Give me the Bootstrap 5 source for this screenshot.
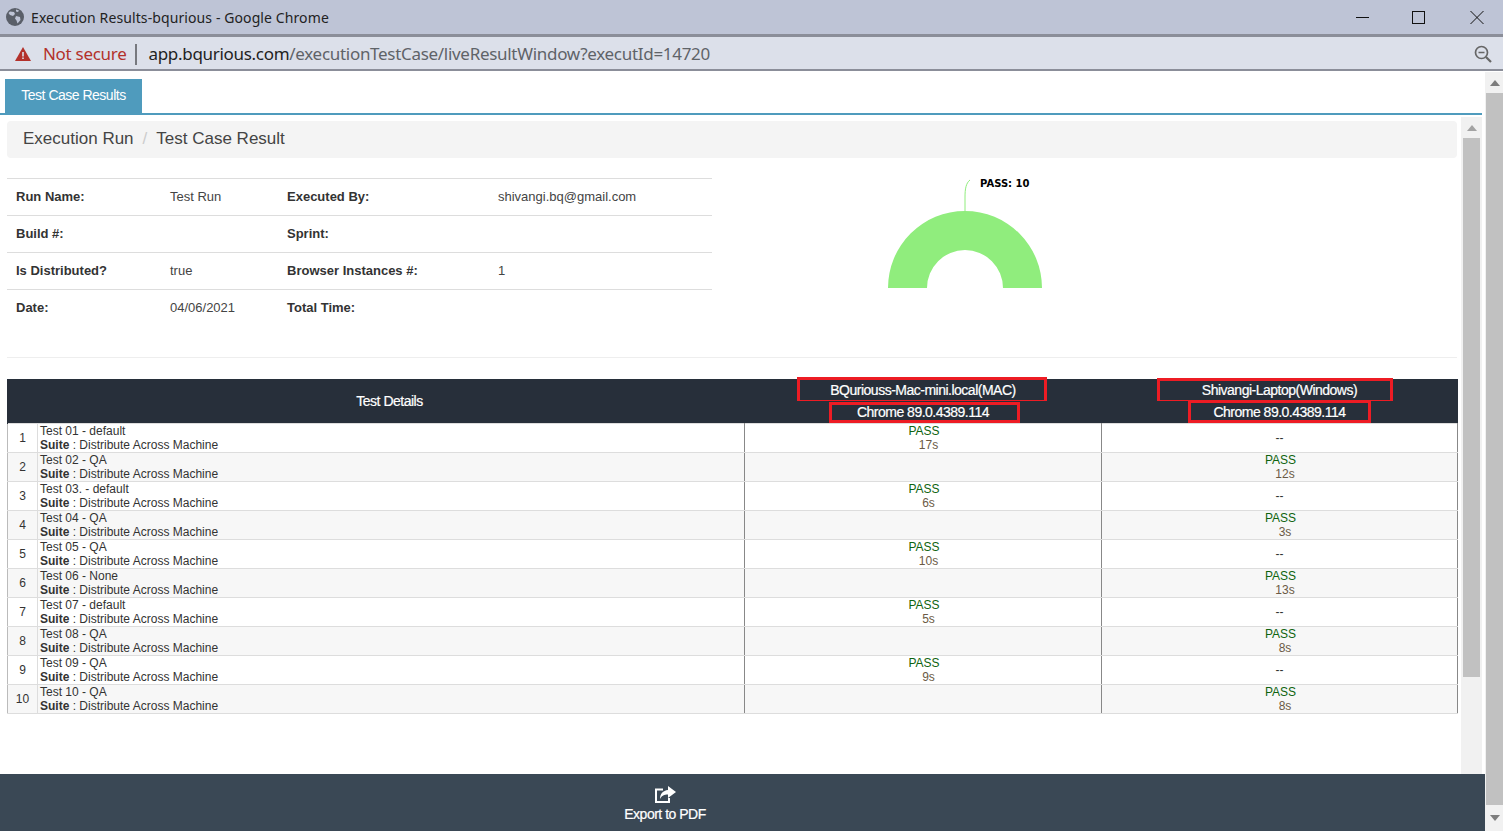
<!DOCTYPE html>
<html lang="en">
<head>
    <meta charset="UTF-8">
    <meta name="viewport" content="width=device-width, initial-scale=1.0">
    <title>Execution Results-bqurious</title>
    <link rel="stylesheet" href="https://cdn.jsdelivr.net/npm/bootstrap@5.3.0/dist/css/bootstrap.min.css">
    <style>
        html, body { height: 831px; overflow: hidden; }
        body { font-family: "Liberation Sans", Arial, sans-serif; color: #333; background: #fff; }

        /* browser window */
        .win-title { height: 37px; background: #bec4d6; border-bottom: 3px solid #8b8e99; padding-left: 6px; font-family: "Noto Sans", sans-serif; font-size: 14px; letter-spacing: .1px; color: #222; }
        .win-title-text { margin-left: 7px; }
        .win-btn { width: 56px; height: 34px; }
        .win-close { padding-left: 3px; }
        .addr-bar { height: 35px; background: #dce0ea; border-bottom: 1px solid #fff; box-shadow: inset 0 -2px 0 #8b8e99; padding: 0 11px 0 15px; font-family: "Noto Sans", sans-serif; font-size: 17px; color: #5f6368; letter-spacing: -.3px; }
        .not-secure { color: #b3312b; margin-left: 12px; }
        .addr-sep { width: 2px; height: 21px; background: #77797f; margin: 0 11px 0 9px; }
        .addr-host { color: #222; }

        /* page */
        .app-shell { height: 759px; }
        .app-main { width: 1485px; }
        .tab-row { height: 43px; padding: 7px 3px 0 5px; margin-right: 3px; border-bottom: 2px solid #4f9bbd; }
        .tab-active { width: 137px; height: 34px; background: #4f9bbd; color: #fff; font-size: 14px; letter-spacing: -.5px; line-height: 33px; text-align: center; }
        .panel-wrap { height: 660px; padding-top: 2px; margin-right: 3px; }
        .panel-body { width: 1461px; padding: 4px 4px 0 7px; }
        .crumbs { height: 37px; background: #f4f4f4; border-radius: 4px; padding: 0 0 1px 16px; font-size: 17px; color: #444; margin-bottom: 20px; }
        .crumb-sep { color: #ccc; margin: 0 9px; }

        .info-wrap { height: 180px; border-bottom: 1px solid #eee; }
        .info-tbl { width: 705px; font-size: 13px; margin: 0; color: #444; }
        .info-tbl td { height: 37px; padding: 0 9px; vertical-align: middle; border-top: 1px solid #ddd; border-bottom: 0; color: #444; }
        .info-tbl tr:last-child td { padding-bottom: 2px; }
        .info-tbl td.lbl { font-weight: 700; color: #333; }
        .w-a { width: 154px; } .w-b { width: 117px; } .w-c { width: 211px; } .w-d { width: 223px; }
        .chart-box { width: 744px; height: 178px; }

        .res-tbl { width: 1450px; margin: 21px 0 0; table-layout: fixed; font-size: 12px; line-height: 14px; color: #333; border-collapse: collapse; }
        .res-tbl thead th { background: #272f3a; color: #fff; font-weight: 400; font-size: 14px; letter-spacing: -.5px; text-align: center; vertical-align: middle; padding: 0; height: 22px; border: 0; -webkit-text-stroke: .2px #fff; }
        .res-tbl thead th.c-w1 { border-left: 1px solid #272f3a; }
        .res-tbl thead th.c-w2 { padding-right: 3px; }
        .res-tbl tbody td { height: 29px; padding: 0; border: 1px solid #ddd; vertical-align: middle; background: #fff; }
        .res-tbl tbody tr:nth-child(even) td { background: #f7f7f7; }
        .res-tbl tbody td.c-num { text-align: center; border-left-color: #bbb; }
        .res-tbl tbody td.c-test { padding-left: 2px; border-right-color: #888; }
        .res-tbl tbody td.c-res { text-align: center; border-left-color: #888; border-right-color: #888; }
        .c-w1 { width: 30px; } .c-w2 { width: 707px; } .c-w3 { width: 357px; } .c-w4 { width: 356px; }
        .res-pass { color: #0f640f; display: block; margin-left: 2px; }
        .res-time { color: #6b5a45; display: block; margin-left: 11px; }
        .th-host { position: relative; }
        .red-box { position: absolute; border: 3px solid #ed1c24; pointer-events: none; }
        .rb1 { left: 52px; top: -2px; width: 250px; height: 26px; }
        .rb2 { left: 84px; top: 1px; width: 191px; height: 21px; }
        .rb3 { left: 55px; top: -1px; width: 236px; height: 25px; }
        .rb4 { left: 86px; top: -1px; width: 183px; height: 23px; }

        .inner-scroll { width: 21px; background: #f1f1f1; padding: 0 2px; }
        .scroll-up { height: 21px; }
        .inner-thumb { width: 17px; height: 539px; background: #c1c1c1; }
        .app-foot { height: 57px; background: #3a4855; color: #fff; font-size: 14px; letter-spacing: -.5px; }
        .export-btn { width: 1330px; line-height: 16px; -webkit-text-stroke: .2px #fff; }
        .export-ico { margin-bottom: 2px; }

        .outer-scroll { width: 18px; background: #f1f1f1; padding-left: 1px; }
        .outer-up { height: 21px; }
        .outer-thumb { height: 712px; background: #c1c1c1; }
        .outer-down { height: 26px; }
    </style>
</head>
<body>

<div class="win-title d-flex align-items-center justify-content-between">
    <div class="d-flex align-items-center">
        <svg width="18" height="18" viewBox="0 0 18 18"><circle cx="9" cy="9" r="9" fill="#5a5f69"/><path d="M4 3.500l4 .5 1 2-2 2-3-1-1.500-2zM10 8l4 1 .5 3-3 3.500-1-3-1.500-2zM10 1.500l3 1-1 1.500-2-.5z" fill="#bec4d6"/></svg>
        <span class="win-title-text">Execution Results-bqurious - Google Chrome</span>
    </div>
    <div class="d-flex">
        <div class="win-btn d-flex align-items-center justify-content-center"><svg width="14" height="16" viewBox="0 0 14 16"><path d="M0 8.500h13" stroke="#111" stroke-width="1"/></svg></div>
        <div class="win-btn d-flex align-items-center justify-content-center"><svg width="14" height="16" viewBox="0 0 14 16"><rect x=".5" y="2.500" width="12" height="12" fill="none" stroke="#111"/></svg></div>
        <div class="win-btn win-close d-flex align-items-center justify-content-center"><svg width="14" height="16" viewBox="0 0 14 16"><path d="M.5 2l13 13M13.500 2l-13 13" stroke="#111" fill="none"/></svg></div>
    </div>
</div>

<div class="addr-bar d-flex align-items-center justify-content-between">
    <div class="d-flex align-items-center">
        <svg width="16" height="14" viewBox="0 0 16 14"><path d="M8 0l8 14H0z" fill="#b3312b"/><path d="M7.200 5h1.600v4.500H7.200zM7.200 10.500h1.600V12H7.200z" fill="#dce0ea"/></svg>
        <span class="not-secure">Not secure</span>
        <span class="addr-sep"></span>
        <span><span class="addr-host">app.bqurious.com</span>/executionTestCase/liveResultWindow?executId=14720</span>
    </div>
    <svg width="18" height="18" viewBox="0 0 18 18"><circle cx="7.500" cy="7.500" r="6" fill="none" stroke="#666" stroke-width="1.700"/><path d="M4.500 7.500h6" stroke="#666" stroke-width="1.500"/><path d="M12 12l5 5" stroke="#666" stroke-width="2.200"/></svg>
</div>

<div class="app-shell d-flex">
    <div class="app-main d-flex flex-column">
        <div class="tab-row">
            <div class="tab-active">Test Case Results</div>
        </div>
        <div class="panel-wrap d-flex">
            <div class="panel-body">
                <div class="crumbs d-flex align-items-center">
                    <span>Execution Run</span><span class="crumb-sep">/</span><span>Test Case Result</span>
                </div>
                <div class="info-wrap d-flex align-items-start">
                    <table class="table info-tbl">
                        <tbody>
                            <tr><td class="lbl w-a">Run Name:</td><td class="w-b">Test Run</td><td class="lbl w-c">Executed By:</td><td class="w-d">shivangi.bq@gmail.com</td></tr>
                            <tr><td class="lbl">Build #:</td><td></td><td class="lbl">Sprint:</td><td></td></tr>
                            <tr><td class="lbl">Is Distributed?</td><td>true</td><td class="lbl">Browser Instances #:</td><td>1</td></tr>
                            <tr><td class="lbl">Date:</td><td>04/06/2021</td><td class="lbl">Total Time:</td><td></td></tr>
                        </tbody>
                    </table>
                    <div class="chart-box">
                        <svg width="744" height="178" viewBox="712 178 744 178">
                            <path d="M888 288a77 77 0 0 1 154 0h-39a38 38 0 0 0-76 0z" fill="#90ed7d"/>
                            <path d="M965 211v-14c0-8 1-14 5-17" fill="none" stroke="#90ed7d" stroke-width="1"/>
                            <text x="980" y="187" font-family="DejaVu Sans, sans-serif" font-size="10" font-weight="700" fill="#000">PASS: 10</text>
                        </svg>
                    </div>
                </div>
                <table class="res-tbl" id="resTable">
                    <thead>
                        <tr>
                            <th class="c-w1" rowspan="2"></th>
                            <th class="c-w2" rowspan="2">Test Details</th>
                            <th class="c-w3 th-host">BQuriouss-Mac-mini.local(MAC)<span class="red-box rb1"></span></th>
                            <th class="c-w4 th-host">Shivangi-Laptop(Windows)<span class="red-box rb3"></span></th>
                        </tr>
                        <tr>
                            <th class="th-host">Chrome 89.0.4389.114<span class="red-box rb2"></span></th>
                            <th class="th-host">Chrome 89.0.4389.114<span class="red-box rb4"></span></th>
                        </tr>
                    </thead>
                    <tbody id="resRows"></tbody>
                </table>
            </div>
            <div class="inner-scroll d-flex flex-column align-items-center">
                <div class="scroll-up d-flex align-items-center justify-content-center"><svg width="10" height="6" viewBox="0 0 10 6"><path d="M5 0l5 6H0z" fill="#a3a3a3"/></svg></div>
                <div class="inner-thumb"></div>
            </div>
        </div>
        <div class="app-foot d-flex">
            <div class="export-btn d-flex flex-column align-items-center pt-2 mt-1">
                <svg class="export-ico" width="22" height="18" viewBox="0 0 22 18"><path d="M9 3.500H2v12.500h13v-4" fill="none" stroke="#fff" stroke-width="2"/><path d="M14 0l8 6-8 6V8.500c-4 0-6 1-8 4.500 0-5 3-8.500 8-9z" fill="#fff"/></svg>
                <span>Export to PDF</span>
            </div>
        </div>
    </div>
    <div class="outer-scroll d-flex flex-column">
        <div class="outer-up d-flex align-items-center justify-content-center"><svg width="10" height="6" viewBox="0 0 10 6"><path d="M5 0l5 6H0z" fill="#7d7d7d"/></svg></div>
        <div class="outer-thumb"></div>
        <div class="outer-down d-flex align-items-center justify-content-center"><svg width="10" height="6" viewBox="0 0 10 6"><path d="M0 0h10L5 6z" fill="#7d7d7d"/></svg></div>
    </div>
</div>

<script src="https://cdn.jsdelivr.net/npm/bootstrap@5.3.0/dist/js/bootstrap.bundle.min.js"></script>
<script>
    // rows of the result table
    const rows = [
        ['Test 01 - default', 0, '17s'], ['Test 02 - QA', 1, '12s'],
        ['Test 03. - default', 0, '6s'], ['Test 04 - QA', 1, '3s'],
        ['Test 05 - QA', 0, '10s'], ['Test 06 - None', 1, '13s'],
        ['Test 07 - default', 0, '5s'], ['Test 08 - QA', 1, '8s'],
        ['Test 09 - QA', 0, '9s'], ['Test 10 - QA', 1, '8s']
    ];
    const pass = t => `<span class="res-pass">PASS</span><span class="res-time">${t}</span>`;
    document.getElementById('resRows').innerHTML = rows.map((r, i) => `
        <tr>
            <td class="c-num">${i + 1}</td>
            <td class="c-test">${r[0]}<br><b>Suite</b> : Distribute Across Machine</td>
            <td class="c-res">${r[1] === 0 ? pass(r[2]) : ''}</td>
            <td class="c-res">${r[1] === 1 ? pass(r[2]) : '--'}</td>
        </tr>`).join('');
</script>

</body>
</html>
